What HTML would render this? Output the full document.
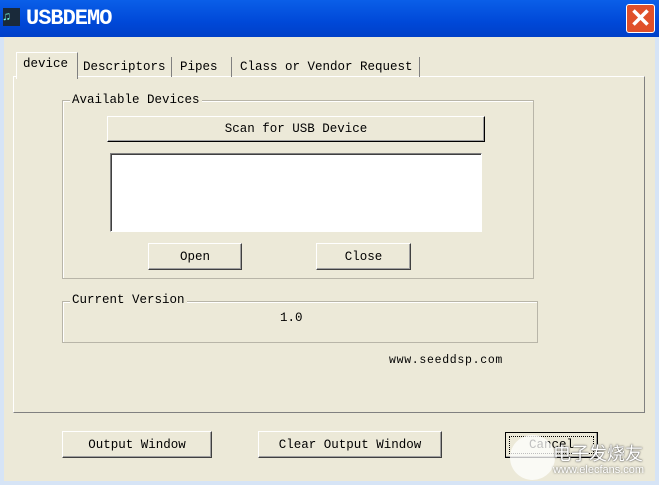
<!DOCTYPE html><html><head><style>
body{margin:0;width:659px;height:485px;overflow:hidden;background:#ECE9D8;font-family:"Liberation Mono","Noto Sans CJK SC",monospace;font-size:12.5px;color:#000;position:relative}
.a{position:absolute}
.btn{position:absolute;background:#ECE9D8;border:1px solid;border-color:#fff #404040 #404040 #fff;box-shadow:inset -1px -1px 0 #a0a0a0;text-align:center;box-sizing:border-box}
.grp{position:absolute;border:1px solid #b8b5a8;box-shadow:inset 1px 1px 0 #fff}
.lbl{position:absolute;background:#ECE9D8;padding:0 2px}
</style></head><body>
<div class="a" style="left:0;top:0;width:659px;height:37px;background:linear-gradient(#0a5fe8,#0048d8 60%,#0040c8)"></div>
<div class="a" style="left:0;top:37px;width:4px;height:448px;background:#d6e4f6"></div>
<div class="a" style="left:655px;top:37px;width:4px;height:448px;background:#d6e4f6"></div>
<div class="a" style="left:0;top:481px;width:659px;height:4px;background:#d6e4f6"></div>
<div class="a" style="left:3px;top:8px;width:17px;height:18px;background:#1a2a3a;color:#7fd;font-size:12px;line-height:18px">♫</div>
<div class="a" style="left:26px;top:6px;color:#fff;font-family:'Liberation Mono',monospace;font-size:22px;font-weight:bold;letter-spacing:-1px">USBDEMO</div>
<div class="a" style="left:626px;top:4px;width:29px;height:29px;border:1px solid #fff;border-radius:3px;background:#e0502a;box-sizing:border-box;color:#fff;font-family:'Liberation Sans';font-size:26px;line-height:27px;text-align:center;font-weight:bold">✕</div>
<div class="a" style="left:13px;top:76px;width:632px;height:337px;border:1px solid;border-color:#fff #808080 #808080 #fff;box-sizing:border-box"></div>
<div class="a" style="left:16px;top:52px;width:60px;height:26px;background:#ECE9D8;border-top:1px solid #fff;border-left:1px solid #fff;border-right:1px solid #808080"></div>
<div class="a" style="left:23px;top:57px">device</div>
<div class="a" style="left:77px;top:57px;width:1px;height:20px;background:#808080"></div>
<div class="a" style="left:83px;top:60px">Descriptors</div>
<div class="a" style="left:171px;top:57px;width:1px;height:20px;background:#808080"></div>
<div class="a" style="left:180px;top:60px">Pipes</div>
<div class="a" style="left:231px;top:57px;width:1px;height:20px;background:#808080"></div>
<div class="a" style="left:240px;top:60px">Class or Vendor Request</div>
<div class="a" style="left:419px;top:57px;width:1px;height:20px;background:#808080"></div>
<div class="grp" style="left:62px;top:100px;width:470px;height:177px"></div>
<div class="lbl" style="left:70px;top:93px">Available Devices</div>
<div class="btn" style="left:107px;top:116px;width:378px;height:26px;line-height:24px;border-color:#fff #000 #000 #fff">Scan for USB Device</div>
<div class="a" style="left:110px;top:153px;width:372px;height:79px;background:#fff;border:1px solid;border-color:#808080 #fff #fff #808080;box-sizing:border-box;box-shadow:inset 1px 1px 0 #404040"></div>
<div class="btn" style="left:148px;top:243px;width:94px;height:27px;line-height:26px">Open</div>
<div class="btn" style="left:316px;top:243px;width:95px;height:27px;line-height:26px">Close</div>
<div class="grp" style="left:62px;top:301px;width:474px;height:40px"></div>
<div class="lbl" style="left:70px;top:293px">Current Version</div>
<div class="a" style="left:280px;top:311px">1.0</div>
<div class="a" style="left:389px;top:354px;font-size:11.5px;letter-spacing:0.7px">www.seeddsp.com</div>
<div class="btn" style="left:62px;top:431px;width:150px;height:27px;line-height:26px">Output Window</div>
<div class="btn" style="left:258px;top:431px;width:184px;height:27px;line-height:26px">Clear Output Window</div>
<div class="btn" style="left:505px;top:432px;width:93px;height:26px;line-height:24px;border:1px solid #000;outline:1px dotted #000;outline-offset:-5px">Cancel</div>
<div class="a" style="left:510px;top:435px;width:45px;height:45px;border-radius:50%;background:rgba(255,255,255,.75)"></div>
<div class="a" style="left:553px;top:440px;color:#fff;font-size:18px;font-family:'Noto Sans CJK SC',sans-serif;text-shadow:0 0 2px #555,0 0 1px #555">电子发烧友</div>
<div class="a" style="left:553px;top:464px;color:#fff;font-size:11px;font-family:'Liberation Sans',sans-serif;text-shadow:0 0 2px #555">www.elecfans.com</div>
</body></html>
